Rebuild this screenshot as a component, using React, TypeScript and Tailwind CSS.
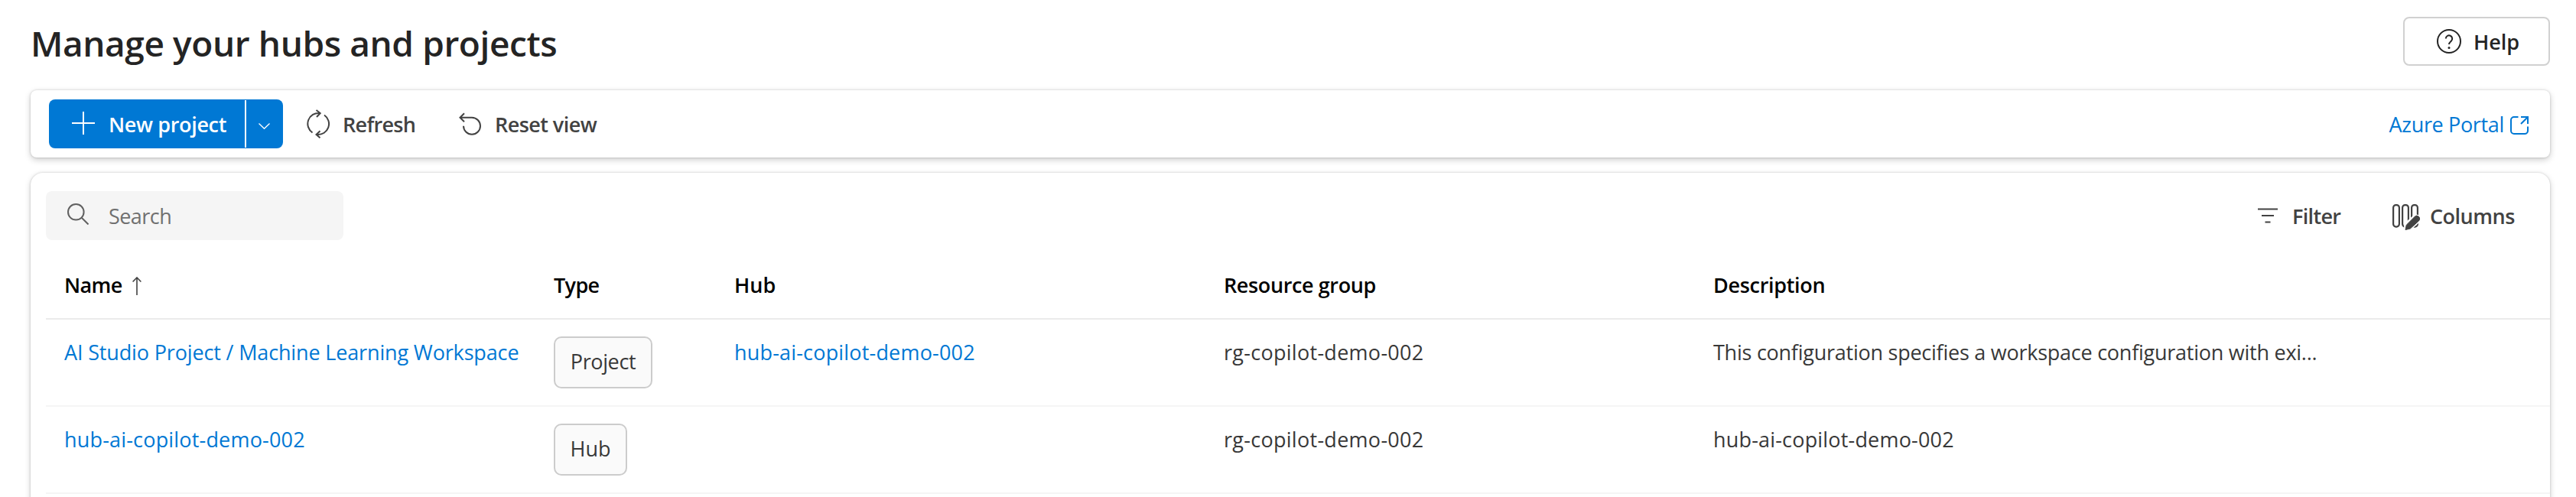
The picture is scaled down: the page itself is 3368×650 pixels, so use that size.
import React from "react";

function Icon({ className = "", d, box, w = 2 }: { className?: string; d: string; box: string; w?: number }) {
  return (
    <svg className={"block shrink-0 " + className} viewBox={box} fill="none" stroke="currentColor" strokeWidth={w}>
      <path d={d} />
    </svg>
  );
}

const columns = [
  { label: "Name", style: "w-[640px] tracking-[-0.6px]" },
  { label: "Type", style: "w-[236px] tracking-[-0.65px]" },
  { label: "Hub", style: "w-[640px]" },
  { label: "Resource group", style: "w-[640px] tracking-[-0.38px]" },
  { label: "Description", style: "tracking-[-0.31px]" },
];

const rows = [
  {
    name: "AI Studio Project / Machine Learning Workspace",
    nameStyle: "tracking-[-0.15px]",
    type: "Project",
    badge: "w-[129px] tracking-[-0.38px]",
    hub: "hub-ai-copilot-demo-002",
    group: "rg-copilot-demo-002",
    description: "This configuration specifies a workspace configuration with exi...",
    descriptionStyle: "tracking-[-0.25px]",
  },
  {
    name: "hub-ai-copilot-demo-002",
    nameStyle: "tracking-[0.18px]",
    type: "Hub",
    badge: "w-[96px]",
    hub: "",
    group: "rg-copilot-demo-002",
    description: "hub-ai-copilot-demo-002",
    descriptionStyle: "tracking-[0.18px]",
  },
];

function ActionBar() {
  return (
    <div className="flex h-22 items-center rounded-lg pr-7 pl-6 font-semibold shadow-[0_0_3px_rgba(0,0,0,0.18),0_3px_8px_rgba(0,0,0,0.2)]">
      <div className="flex h-16 w-[306px] items-center overflow-hidden rounded-lg bg-[#0078d4] text-white">
        <button className="flex h-full w-[256px] items-center pl-[30px]">
          <Icon className="mb-0.5 size-[30px]" box="0 0 30 30" d="M15 0V30M0 15H30" />
          <span className="ml-[18px] pt-0.5 tracking-[-0.35px] whitespace-nowrap">New project</span>
        </button>
        <div className="h-[62px] w-0.5 bg-white" />
        <button className="flex h-full flex-1 items-center pt-1.5 pl-4">
          <Icon className="h-2 w-[15px]" box="0 0 15 8" w={1.3} d="M.5 .5L7.500 7.300L14.500 .5" />
        </button>
      </div>
      <button className="ml-[31px] flex items-center">
        <Icon
          className="h-[38px] w-[32px]"
          box="0 0 32 38"
          d="M7.500 30.500A14 14 0 0 1 17 5M12.500 1L17.700 5L13 10M23 7.500A14 14 0 0 1 14 33M17.500 28.300L12.500 33L17.500 37.300"
        />
        <span className="ml-[15px] w-[95px] pt-0.5 text-left tracking-[-0.7px] whitespace-nowrap">Refresh</span>
      </button>
      <button className="ml-[57px] flex items-center">
        <Icon
          className="size-[30px]"
          box="0 0 30 30"
          d="M7 1.200L1.500 6.700L7 12.200M1.500 6.700H17A11 11 0 1 1 6 17.700"
        />
        <span className="ml-[17px] pt-0.5 tracking-[-0.56px] whitespace-nowrap">Reset view</span>
      </button>
      <a className="ml-auto flex items-center font-normal text-[#0078d4]">
        <span className="pt-0.5 tracking-[-0.34px] whitespace-nowrap">Azure Portal</span>
        <Icon
          className="mt-1 ml-2 size-6"
          box="0 0 24 24"
          d="M10.500 1H5a4 4 0 0 0-4 4V19a4 4 0 0 0 4 4H19a4 4 0 0 0 4-4V13.500M14 1H23V10M23 1L14 10"
        />
      </a>
    </div>
  );
}

function GridTools() {
  return (
    <div className="flex h-[102px] items-start pt-6 pl-5">
      <div className="flex h-16 w-[389px] items-center rounded-lg bg-[#f5f5f5] pl-7 text-[#707070]">
        <svg className="mb-1 block size-7 shrink-0" viewBox="0 0 28 28" fill="none" stroke="#616161" strokeWidth="2">
          <circle cx="11.300" cy="11.300" r="10.300" />
          <path d="M18.500 18.500L27.500 27.500" />
        </svg>
        <span className="ml-[26px] pt-0.5 tracking-[-0.55px]">Search</span>
      </div>
      <div className="mr-[46px] ml-auto flex h-16 items-center font-semibold">
        <Icon className="h-5 w-7" box="0 0 28 20" d="M1 1.500H27M6 10H22M10.500 18.500H17.500" />
        <span className="ml-[18px] w-[66px] pt-0.5 tracking-[-0.68px]">Filter</span>
        <svg className="mt-[3px] ml-[65px] block h-[34px] w-9" viewBox="0 0 36 34" fill="none">
          <g stroke="currentColor" strokeWidth="2.2">
            <rect x="1.100" y="1.100" width="7.800" height="28.500" rx="3.500" />
            <rect x="13.100" y="1.100" width="7.800" height="28.500" rx="3.500" />
            <rect x="25.100" y="1.100" width="7.800" height="28.500" rx="3.500" />
          </g>
          <path d="M21 28.500L31 19.500" stroke="white" strokeWidth="12" strokeLinecap="round" />
          <path
            d="M17 33.500L18.300 27.200L29 16.500a3.800 3.800 0 0 1 5.600 5.300L23.300 32z"
            fill="currentColor"
            stroke="currentColor"
            strokeLinejoin="round"
          />
        </svg>
        <span className="ml-[13px] w-[111px] pt-0.5 tracking-[-0.5px]">Columns</span>
      </div>
    </div>
  );
}

export default function App() {
  return (
    <div className="h-[650px] w-[3368px] overflow-hidden bg-white pr-[34px] pl-10 font-['Open_Sans','Noto_Sans',sans-serif] text-[27px] text-[#424242]">
      <header className="flex h-[118px] items-start justify-between pt-[22px]">
        <h1 className="text-[46px] leading-[68px] font-semibold tracking-[-0.4px] whitespace-nowrap text-[#242424]">
          Manage your hubs and projects
        </h1>
        <button className="flex h-16 w-[192px] items-center rounded-lg border-2 border-[#d1d1d1] pl-[42px] font-semibold text-[#242424]">
          <svg className="block size-8 shrink-0" viewBox="0 0 32 32" fill="none" stroke="currentColor" strokeWidth="2">
            <circle cx="16" cy="16" r="15" />
            <path d="M11.800 12.500a4.200 4.200 0 1 1 7 3.200c-1.700 1.500-2.800 2.200-2.800 4.300" />
            <circle cx="16" cy="24.500" r="1.500" fill="currentColor" stroke="none" />
          </svg>
          <span className="ml-4 pt-0.5">Help</span>
        </button>
      </header>

      <ActionBar />

      <main className="mt-5 h-[480px] rounded-2xl shadow-[0_0_3px_rgba(0,0,0,0.18),0_3px_8px_rgba(0,0,0,0.18)]">
        <GridTools />
        <div className="ml-5">
          <div className="flex h-[90px] items-center border-b-2 border-[#ebebeb] pt-[3px] pl-6 font-semibold text-black">
            {columns.map((c) => (
              <div key={c.label} className={"flex shrink-0 items-center " + c.style}>
                <span>{c.label}</span>
                {c.label === "Name" && (
                  <Icon className="ml-[13px] h-6 w-3 text-[#424242]" box="0 0 12 24" w={1.6} d="M6 24V1M.6 6.500L6 1L11.400 6.500" />
                )}
              </div>
            ))}
          </div>
          {rows.map((r) => (
            <div
              key={r.type}
              className="flex h-[114px] items-start border-b-2 border-[#f5f5f5] pt-[22px] pl-6 leading-[41px] whitespace-nowrap text-[#383838]"
            >
              <div className={"w-[640px] shrink-0 text-[#0078d4] " + r.nameStyle}>{r.name}</div>
              <div className="w-[236px] shrink-0">
                <div
                  className={
                    "flex h-[68px] items-center justify-center rounded-[10px] border-2 border-[#cccccc] bg-[#fafafa] pb-[3px] " + r.badge
                  }
                >
                  {r.type}
                </div>
              </div>
              <div className="w-[640px] shrink-0 tracking-[0.18px] text-[#0078d4]">{r.hub}</div>
              <div className="w-[640px] shrink-0 tracking-[0.28px]">{r.group}</div>
              <div className={r.descriptionStyle}>{r.description}</div>
            </div>
          ))}
        </div>
      </main>
    </div>
  );
}
